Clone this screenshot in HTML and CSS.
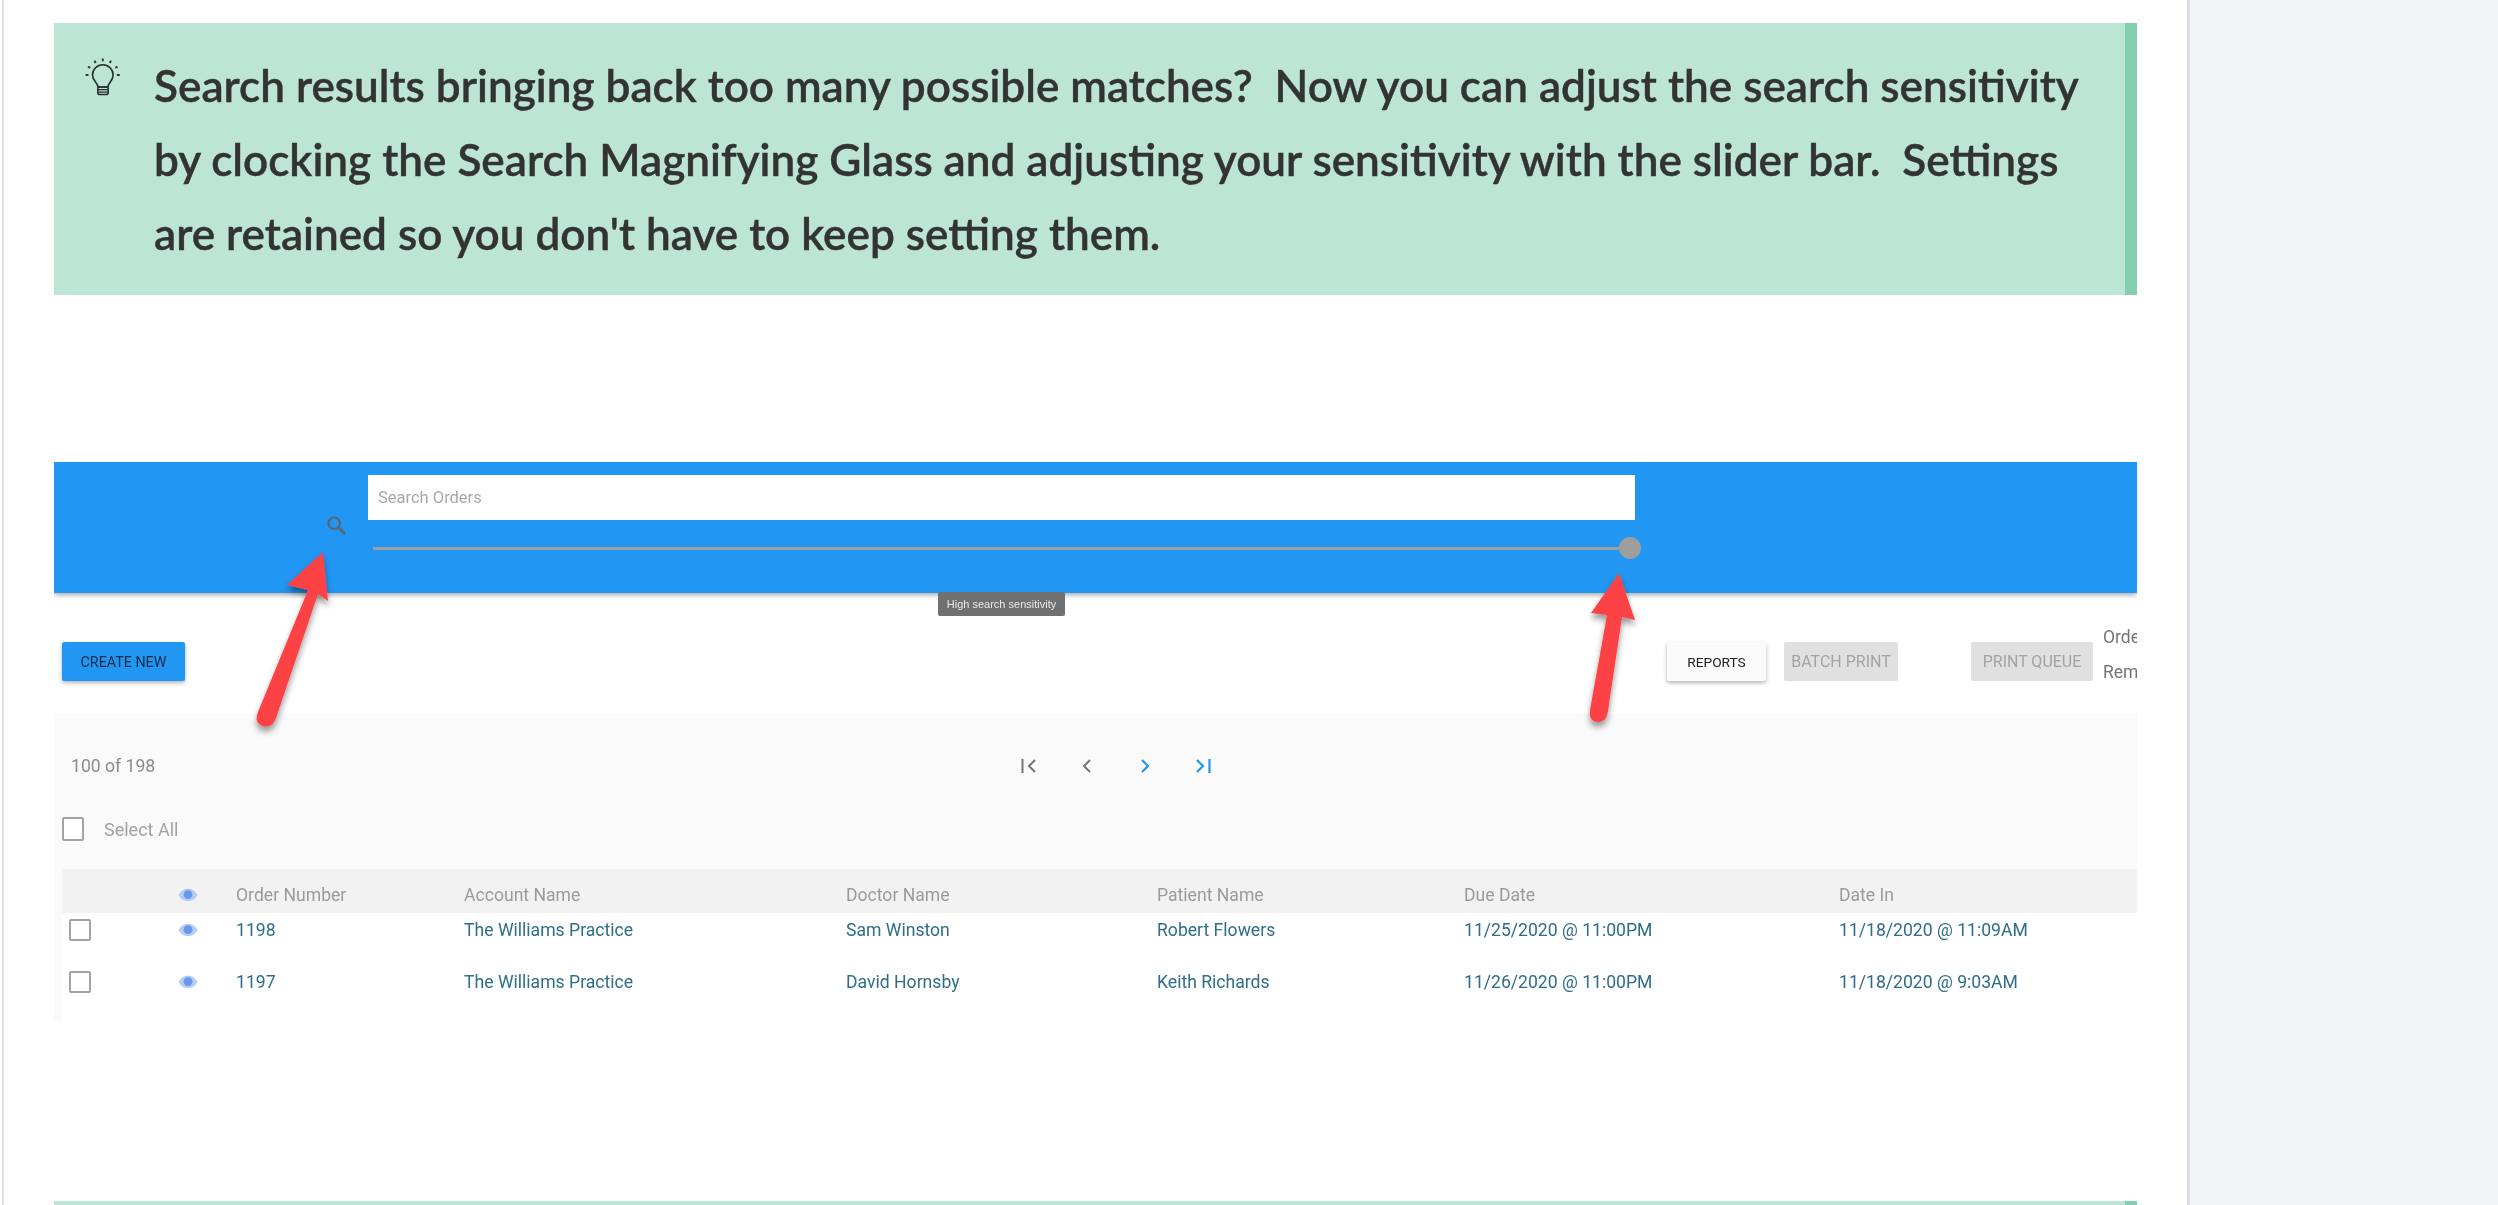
FILE: index.html
```html
<!DOCTYPE html>
<html lang="en">
<head>
<meta charset="utf-8">
<title>Search sensitivity</title>
<link rel="stylesheet" href="styles.css">
</head>
<body>
<main class="article">
  <section class="callout">
    <svg class="bulb" viewBox="0 0 36 38" width="36" height="38" fill="none" stroke="#2b2b2b">
      <path stroke-width="1.6" d="M13 29C13 25 7.5 23 7.5 17a10.3 10.3 0 0 1 20.6 0C28.1 23 23 25 23 29Z"/>
      <rect x="12.8" y="29" width="10.4" height="7.6" rx="1.8" stroke-width="1.5"/>
      <path stroke-width="1.2" d="M12.8 31.6H23.2M12.8 34.1H23.2"/>
      <path stroke-width="2" stroke="#3a3a3a" d="M17.8 0.5V3.2M9.5 2.6L10.7 5M26 2.6L24.8 5M3 8.6L5.3 9.9M32.6 8.6L30.3 9.9M0.5 17H3.5M31.8 17H34.8"/>
    </svg>
    <p class="callout-text">Search results bringing back too many possible matches?&nbsp; Now you can adjust the search sensitivity by clocking the Search Magnifying Glass and adjusting your sensitivity with the slider bar.&nbsp; Settings are retained so you don't have to keep setting them.</p>
  </section>

  <figure class="shot">
    <header class="topbar">
      <svg class="search-icon" viewBox="0 0 22 22" width="21" height="21" fill="none" stroke="#5a6570" stroke-width="2.2">
        <circle cx="8.6" cy="8.6" r="6"/>
        <path d="M13 13L20 20" stroke-width="2.6"/>
      </svg>
      <div class="search-col">
        <div class="search-input">Search Orders</div>
        <div class="slider"><span class="thumb"></span></div>
      </div>
    </header>
    <div class="tooltip">High search sensitivity</div>

    <div class="toolbar">
      <button class="btn btn-primary">CREATE NEW</button>
      <button class="btn btn-white">REPORTS</button>
      <button class="btn btn-disabled btn-batch">BATCH PRINT</button>
      <button class="btn btn-disabled btn-queue">PRINT QUEUE</button>
      <div class="legend"><span>Orde</span><span>Rem</span></div>
    </div>

    <div class="panel">
      <div class="pager">
        <span class="count">100 of 198</span>
        <div class="pager-icons">
          <svg viewBox="0 0 18 18" width="18" height="18" fill="none" stroke="#757575" stroke-width="2"><path d="M2.5 2V16M15 3L9 9L15 15"/></svg>
          <svg viewBox="0 0 18 18" width="18" height="18" fill="none" stroke="#757575" stroke-width="2"><path d="M12 3L6 9L12 15"/></svg>
          <svg viewBox="0 0 18 18" width="18" height="18" fill="none" stroke="#2196f3" stroke-width="2.2"><path d="M6 3L12 9L6 15"/></svg>
          <svg viewBox="0 0 18 18" width="18" height="18" fill="none" stroke="#2196f3" stroke-width="2.2"><path d="M3 3L9 9L3 15M15.5 2V16"/></svg>
        </div>
      </div>
      <label class="select-all"><span class="check"></span><span>Select All</span></label>

      <div class="table">
        <div class="row head">
          <span></span>
          <svg class="eye" viewBox="0 0 20 14" width="20" height="14"><path class="eye-white" d="M0.5 7C3 2.6 6.2 0.8 10 0.8S17 2.6 19.5 7C17 11.4 13.8 13.2 10 13.2S3 11.4 0.5 7Z"/><circle class="eye-pupil" cx="10" cy="6.6" r="4.4"/></svg>
          <span>Order Number</span><span>Account Name</span><span>Doctor Name</span><span>Patient Name</span><span>Due Date</span><span>Date In</span>
        </div>
        <div class="row data first">
          <span class="check"></span>
          <svg class="eye" viewBox="0 0 20 14" width="20" height="14"><path class="eye-white" d="M0.5 7C3 2.6 6.2 0.8 10 0.8S17 2.6 19.5 7C17 11.4 13.8 13.2 10 13.2S3 11.4 0.5 7Z"/><circle class="eye-pupil" cx="10" cy="6.6" r="4.4"/></svg>
          <span>1198</span><span>The Williams Practice</span><span>Sam Winston</span><span>Robert Flowers</span><span>11/25/2020 @ 11:00PM</span><span>11/18/2020 @ 11:09AM</span>
        </div>
        <div class="row data second">
          <span class="check"></span>
          <svg class="eye" viewBox="0 0 20 14" width="20" height="14"><path class="eye-white" d="M0.5 7C3 2.6 6.2 0.8 10 0.8S17 2.6 19.5 7C17 11.4 13.8 13.2 10 13.2S3 11.4 0.5 7Z"/><circle class="eye-pupil" cx="10" cy="6.6" r="4.4"/></svg>
          <span>1197</span><span>The Williams Practice</span><span>David Hornsby</span><span>Keith Richards</span><span>11/26/2020 @ 11:00PM</span><span>11/18/2020 @ 9:03AM</span>
        </div>
      </div>
    </div>

    <svg class="arrows" viewBox="0 0 2083 559" width="2083" height="559">
      <defs>
        <filter id="arrow-shadow" x="-30%" y="-10%" width="160%" height="130%">
          <feDropShadow dx="0" dy="5" stdDeviation="3" flood-color="#000" flood-opacity=".4"/>
        </filter>
      </defs>
      <g filter="url(#arrow-shadow)" fill="#fd4345">
        <path d="M269 90L233 123L254 128L204 250C201 258 203 262 209 264C215 266 219 263 222 256L264 132L274 139Z"/>
        <path d="M1565 111L1537 151L1553 153L1536 248C1535 256 1538 260 1544 260C1550 260 1553 256 1554 249L1568 155L1581 158Z"/>
      </g>
    </svg>
  </figure>

  <section class="callout callout-next"></section>
</main>
<aside class="sidebar"></aside>
</body>
</html>
```

FILE: styles.css
```css
* { box-sizing: border-box; }
html, body { margin: 0; height: 100%; }
body {
  width: 2498px;
  height: 1205px;
  overflow: hidden;
  display: flex;
  background: #fff;
  font-family: Roboto, "Liberation Sans", sans-serif;
}
.article {
  width: 2188px;
  height: 1205px;
  flex: none;
  overflow: hidden;
  margin-left: 2px;
  padding: 23px 50px 0 50px;
  border-left: 2px solid #dde0e8;
  border-right: 3px solid #d9dce2;
  background: #fff;
}
.sidebar { flex: 1; background: #f3f4f6; }

/* callout */
.callout {
  display: flex;
  height: 272px;
  background: #bce5d6;
  border-right: 12px solid #84cfb0;
  padding: 25px 30px 0 31px;
}
.bulb { flex: none; margin-top: 10px; }
.callout-text {
  margin: 0 0 0 33px;
  font-family: Lato, "Liberation Sans", sans-serif;
  font-weight: 600;
  font-size: 44.1px;
  line-height: 74px;
  color: #333;
  -webkit-text-stroke: .4px #333;
  filter: blur(.4px);
}
.callout-next { height: 40px; margin-top: 180px; }

/* screenshot */
.shot {
  position: relative;
  margin: 167px 0 0;
  height: 559px;
  width: 2083px;
  overflow: hidden;
  background: #fff;
  filter: blur(.45px);
}
.topbar {
  height: 131px;
  background: #2196f3;
  box-shadow: 0 2px 5px rgba(0,0,0,.35);
  display: flex;
  align-items: flex-start;
  padding: 13px 0 0 272px;
  position: relative;
}
.search-icon { margin-top: 40px; margin-right: 21px; flex: none; }
.search-col { width: 1267px; }
.search-input {
  height: 45px;
  background: #fff;
  color: #a8a8a8;
  font-size: 16.5px;
  line-height: 45px;
  padding-left: 10px;
}
.slider {
  position: relative;
  margin: 27px 0 0 5px;
  height: 3px;
  width: 1257px;
  background: #9e9e9e;
}
.thumb {
  position: absolute;
  right: -11px;
  top: -10px;
  width: 22px;
  height: 22px;
  border-radius: 50%;
  background: #9e9e9e;
}
.tooltip {
  position: absolute;
  left: 884px;
  top: 130px;
  width: 127px;
  height: 24px;
  background: #707070;
  border-radius: 2px;
  color: #e8e8e8;
  font: 11px/24px "Liberation Sans", sans-serif;
  text-align: center;
}
.toolbar {
  height: 121px;
  display: flex;
  align-items: flex-start;
  padding: 49px 0 0 8px;
  white-space: nowrap;
  overflow: hidden;
}
.btn {
  height: 39px;
  border: 0;
  border-radius: 2px;
  padding: 0;
  font-family: Roboto, sans-serif;
  flex: none;
}
.btn-primary {
  width: 123px;
  background: #2196f3;
  color: #0d2b44;
  font-size: 14.3px;
  box-shadow: 0 2px 4px rgba(0,0,0,.3);
}
.btn-white {
  width: 99px;
  margin-left: 1482px;
  background: #fafafa;
  color: #222;
  font-size: 13.7px;
  box-shadow: 0 2px 4px rgba(0,0,0,.3);
}
.btn-disabled { background: #e0e0e0; color: #a3a3a3; font-size: 16px; }
.btn-batch { width: 114px; margin-left: 18px; }
.btn-queue { width: 122px; margin-left: 73px; }
.legend {
  display: flex;
  flex-direction: column;
  gap: 15px;
  margin: -15px 0 0 10px;
  color: #757575;
  font-size: 17.5px;
  line-height: 20px;
}

.panel {
  height: 307px;
  background: #fafafa;
  padding-left: 8px;
}
.pager {
  position: relative;
  display: flex;
  align-items: center;
  height: 103px;
  padding-left: 9px;
  color: #8c8c8c;
  font-size: 17.6px;
}
.pager-icons {
  position: absolute;
  left: 958px;
  top: 43px;
  display: flex;
  gap: 40px;
}
.select-all {
  display: flex;
  align-items: center;
  gap: 20px;
  height: 24px;
  color: #a3a3a3;
  font-size: 18px;
}
.check {
  display: block;
  width: 22px;
  height: 24px;
  border: 2px solid #a3a3a3;
  border-radius: 2px;
  background: #fff;
}
.table { margin-top: 28px; background: #fff; height: 152px; }
.row {
  display: grid;
  grid-template-columns: 116px 58px 228px 382px 311px 307px 375px 1fr;
  align-items: center;
  font-size: 17.6px;
  white-space: nowrap;
}
.head { height: 44px; background: #f2f2f2; color: #9a9a9a; padding-top: 8px; }
.data { color: #2f6d88; }
.data .check { margin-left: 7px; height: 22px; }
.first { height: 33px; }
.second { height: 71px; }
.eye { justify-self: start; }
.eye-white { fill: #b4ccf7; }
.eye-pupil { fill: #6a97ea; }

.arrows {
  position: absolute;
  left: 0;
  top: 0;
  pointer-events: none;
}
```
